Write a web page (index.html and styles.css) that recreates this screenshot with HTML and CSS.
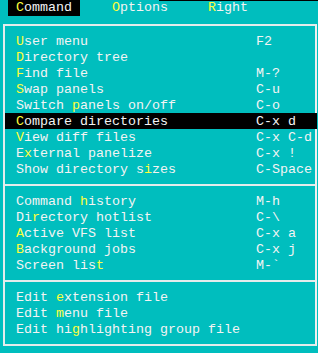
FILE: index.html
```html
<!DOCTYPE html>
<html lang="en">
<head>
    <meta charset="UTF-8">
    <meta name="viewport" content="width=device-width, initial-scale=1.0">
    <title>Command menu</title>
    <link rel="stylesheet" href="styles.css">
</head>
<body>
    <div class="menubar">
        <span class="menubar-item active"><b>C</b>ommand</span>
        <span class="menubar-item"><b>O</b>ptions</span>
        <span class="menubar-item"><b>R</b>ight</span>
    </div>

    <div class="menu">
        <div class="item"><span><b>U</b>ser menu</span><span>F2</span></div>
        <div class="item"><span><b>D</b>irectory tree</span><span></span></div>
        <div class="item"><span><b>F</b>ind file</span><span>M-?</span></div>
        <div class="item"><span><b>S</b>wap panels</span><span>C-u</span></div>
        <div class="item"><span>Switch <b>p</b>anels on/off</span><span>C-o</span></div>
        <div class="item selected"><span><b>C</b>ompare directories</span><span>C-x d</span></div>
        <div class="item"><span><b>V</b>iew diff files</span><span>C-x C-d</span></div>
        <div class="item"><span>E<b>x</b>ternal panelize</span><span>C-x !</span></div>
        <div class="item"><span>Show directory s<b>i</b>zes</span><span>C-Space</span></div>
        <div class="separator"></div>
        <div class="item"><span>Command <b>h</b>istory</span><span>M-h</span></div>
        <div class="item"><span>Di<b>r</b>ectory hotlist</span><span>C-\</span></div>
        <div class="item"><span><b>A</b>ctive VFS list</span><span>C-x a</span></div>
        <div class="item"><span><b>B</b>ackground jobs</span><span>C-x j</span></div>
        <div class="item"><span>Screen lis<b>t</b></span><span>M-`</span></div>
        <div class="separator"></div>
        <div class="item"><span>Edit <b>e</b>xtension file</span><span></span></div>
        <div class="item"><span>Edit <b>m</b>enu file</span><span></span></div>
        <div class="item"><span>Edit hi<b>g</b>hlighting group file</span><span></span></div>
    </div>
</body>
</html>
```
FILE: styles.css
```css
body {
    margin: 0;
    width: 318px;
    height: 353px;
    overflow: hidden;
    background: #00bebe;
    color: #f4f4f4;
    font-family: "Liberation Mono", monospace;
    font-size: 13.333px;
    line-height: 16px;
}

b {
    font-weight: normal;
    color: #ffff3c;
}

/* top menu bar */
.menubar {
    display: flex;
    gap: 24px;
    height: 16px;
    padding-left: 8px;
    background: linear-gradient(#000, #000) right top / 50% 1px no-repeat;
}

.menubar-item {
    padding: 0 8px;
    white-space: pre;
}

.menubar-item.active {
    background: #000;
}

/* dropdown box */
.menu {
    width: 310px;
    height: 311px;
    margin: 8px 0 0 3px;
    padding-top: 7px;
    border: 2px solid #e4ecec;
    border-right-color: #f0f0f0;
}

.item {
    display: grid;
    grid-template-columns: 240px 1fr;
    box-sizing: border-box;
    height: 16px;
    padding: 1px 0 0 11px;
    white-space: pre;
}

.item.selected {
    background: #000;
    margin-right: -2px;
}

.separator {
    height: 16px;
    background: linear-gradient(#e4ecec, #e4ecec) 0 7px / 100% 2px no-repeat;
}
```
